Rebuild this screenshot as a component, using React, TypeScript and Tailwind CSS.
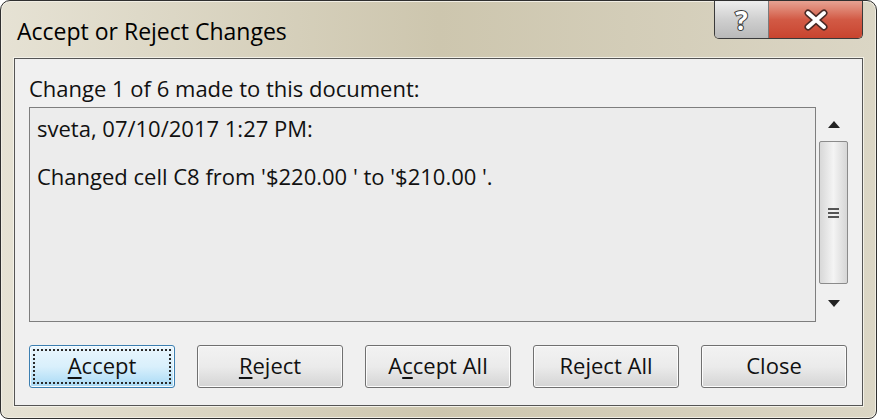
import React from "react";

function Btn({ children, focused = false }: { children: React.ReactNode; focused?: boolean }) {
  if (focused) {
    return (
      <div className="w-[146px] h-[43px] rounded-[3px] border border-[#3c7fb1] bg-gradient-to-b from-[#eaf6fd] via-[#d9f0fc] to-[#a7d9f5] p-[3px] shadow-[inset_0_0_0_1px_#f6fbfe]">
        <div className="h-full w-full border-2 border-dotted border-[#2a2a2a] flex items-center justify-center pb-[3px] text-[22px] leading-none text-[#111]">
          {children}
        </div>
      </div>
    );
  }
  return (
    <div className="w-[146px] h-[43px] rounded-[3px] border border-[#707070] bg-gradient-to-b from-[#f2f2f2] via-[#ebebeb] to-[#d4d4d4] shadow-[inset_0_0_0_1px_#fcfcfc] flex items-center justify-center pb-[3px] text-[22px] leading-none text-[#111]">
      {children}
    </div>
  );
}

function U({ children }: { children: React.ReactNode }) {
  return <span className="underline decoration-[1.5px] underline-offset-[3px]">{children}</span>;
}

export default function App() {
  return (
    <div className="w-[878px] h-[420px] bg-white font-['Open_Sans','Noto_Sans',sans-serif]">
      <div className="flex flex-col w-[877px] h-[419px] rounded-t-[10px] rounded-b-[8px] border border-[#2f2f2f] bg-gradient-to-r from-[#e6e2d4] via-[#cdc6ae] to-[#dbd6c5] px-[13px] pb-[12px] shadow-[inset_0_0_0_1px_#f1eee4]">
        <div className="flex h-[57px] items-start justify-between">
          <div className="pt-[16px] pl-[3px] text-[23px] leading-[28px] text-black">Accept or Reject Changes</div>
          <div className="flex h-[38px] rounded-b-[5px] border border-t-0 border-[#3a3a3a] overflow-hidden">
            <div className="w-[54px] h-full flex items-center justify-center bg-gradient-to-b from-[#eeeeee] via-[#cfcfcf] to-[#b9b9b9] border-r border-[#7a7a7a]">
              <span className="text-[26px] font-bold leading-none text-white [-webkit-text-stroke:2px_#3a3a3a] [paint-order:stroke_fill]">?</span>
            </div>
            <div className="w-[93px] h-full flex items-center justify-center bg-gradient-to-b from-[#e6a293] via-[#d25a45] to-[#c8442f]">
              <svg width="30" height="22" viewBox="0 0 30 22">
                <path d="M7 4 L23 18 M23 4 L7 18" stroke="#4a2a25" strokeWidth="7" strokeLinecap="round" />
                <path d="M7 4 L23 18 M23 4 L7 18" stroke="#ffffff" strokeWidth="4" strokeLinecap="round" />
              </svg>
            </div>
          </div>
        </div>
        <div className="flex-1 flex flex-col border border-[#555555] bg-[#f0f0f0] px-[14px] shadow-[0_0_0_1px_#f3f1e8]">
          <div className="pt-[16px] h-[48px] text-[22px] leading-[26px] text-[#111]">Change 1 of 6 made to this document:</div>
          <div className="flex h-[215px]">
            <div className="w-[787px] h-full border border-[#7e7e7e] bg-[#ececec] pl-[7px] pt-[7px] text-[22px] leading-[26px] text-[#111]">
              <div>sveta, 07/10/2017 1:27 PM:</div>
              <div className="mt-[22px]">Changed cell C8 from '$220.00 ' to '$210.00 '.</div>
            </div>
            <div className="flex-1 flex flex-col items-center pl-[3px]">
              <div className="h-[34px] flex items-center justify-center">
                <svg width="12" height="7" viewBox="0 0 12 7"><path d="M0 7 L6 0 L12 7 Z" fill="#222" /></svg>
              </div>
              <div className="w-[29px] h-[143px] rounded-[2px] border border-[#8b8b8b] bg-gradient-to-r from-[#d8d8d8] via-[#f4f4f4] to-[#d6d6d6] flex flex-col items-center justify-center gap-[2px]">
                <div className="w-[11px] h-[2px] bg-[#555]" />
                <div className="w-[11px] h-[2px] bg-[#555]" />
                <div className="w-[11px] h-[2px] bg-[#555]" />
              </div>
              <div className="flex-1 flex items-center justify-center">
                <svg width="12" height="7" viewBox="0 0 12 7"><path d="M0 0 L12 0 L6 7 Z" fill="#222" /></svg>
              </div>
            </div>
          </div>
          <div className="mt-[23px] flex gap-[22px]">
            <Btn focused><U>A</U>ccept</Btn>
            <Btn><U>R</U>eject</Btn>
            <Btn>A<U>c</U>cept All</Btn>
            <Btn>Re<U>j</U>ect All</Btn>
            <Btn>Close</Btn>
          </div>
        </div>
      </div>
    </div>
  );
}
